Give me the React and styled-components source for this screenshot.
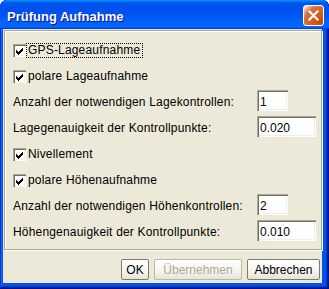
import React from "react";
import styled, { createGlobalStyle } from "styled-components";

const GlobalStyle = createGlobalStyle`
  html, body {
    margin: 0;
    padding: 0;
    background: #ffffff;
    overflow: hidden;
  }
  body {
    font-family: "Liberation Sans", Arial, sans-serif;
  }
`;

const Window = styled.div`
  width: 329px;
  height: 289px;
  box-sizing: border-box;
  display: flex;
  flex-direction: column;
  background: #0055e5;
  border-radius: 7px 7px 0 0;
  overflow: hidden;
  box-shadow: inset -1px -1px #00138c, inset 1px 1px #0831d9,
    inset -2px -2px #001ea0, inset 2px 2px #166aee, inset -3px -3px #003bda,
    inset 3px 3px #0855dd;
`;

const TitleBar = styled.div`
  height: 29px;
  flex: none;
  display: flex;
  align-items: flex-start;
  justify-content: space-between;
  padding: 0 5px 0 7px;
  box-sizing: border-box;
  background: linear-gradient(
    180deg,
    #0997ff,
    #0053ee 10%,
    #0050ee 40%,
    #0066ff 86%,
    #0066ff 92%,
    #005bff 95%,
    #003dd7 97%,
    #003dd7
  );
  border-radius: 7px 7px 0 0;
`;

const Title = styled.div`
  margin-top: 9px;
  line-height: 15px;
  font-size: 13px;
  font-weight: bold;
  color: #ffffff;
  text-shadow: 1px 1px #0f1089;
`;

const CloseButton = styled.div`
  margin-top: 5px;
  width: 21px;
  height: 21px;
  box-sizing: border-box;
  border: 1px solid #ffffff;
  border-radius: 3px;
  display: flex;
  align-items: center;
  justify-content: center;
  background: radial-gradient(
    circle at 90% 90%,
    #cc4600 0,
    #dc6527 55%,
    #cd7546 70%,
    #ffccb2 90%,
    #ffffff 100%
  );
`;

const ClientArea = styled.div`
  flex: 1;
  margin: 0 7px 6px 3px;
  background: #ece9d8;
  display: flex;
  flex-direction: column;
`;

const Panel = styled.div`
  margin: 1px 0 0 1px;
  border: 1px solid #aca899;
  box-shadow: inset 1px 1px #ffffff, 1px 1px #ffffff;
  padding: 6px 5px 4px 8px;
  display: flex;
  flex-direction: column;
`;

const CheckRow = styled.div`
  height: 26px;
  display: flex;
  align-items: center;
`;

const Box = styled.span`
  width: 13px;
  height: 13px;
  flex: none;
  background: #ffffff;
  box-shadow: inset 1px 1px #aca899, inset 2px 2px #716f64,
    inset -1px -1px #ffffff, inset -2px -2px #f1efe2;
  display: block;
`;

const CheckText = styled.span`
  border: 1px dotted ${(p) => (p.$focused ? "#000000" : "transparent")};
  padding: 0 2px 0 1px;
  line-height: 13px;
  font-size: 12px;
  letter-spacing: 0.18px;
  color: #000000;
`;

const FieldRow = styled.div`
  height: 26px;
  display: flex;
  align-items: flex-start;
`;

const FieldLabel = styled.span`
  flex: 1;
  line-height: 26px;
  font-size: 12px;
  letter-spacing: 0.18px;
  color: #000000;
  white-space: nowrap;
`;

const FieldSlot = styled.div`
  width: 59px;
  flex: none;
  padding-top: 1px;
`;

const TextField = styled.input`
  display: block;
  width: ${(p) => p.$width}px;
  height: 21px;
  box-sizing: border-box;
  border: none;
  outline: none;
  margin: 0;
  padding: 2px 0 0 3px;
  background: #ffffff;
  box-shadow: inset 1px 1px #aca899, inset 2px 2px #716f64,
    inset -1px -1px #ffffff, inset -2px -2px #f1efe2;
  font-family: "Liberation Sans", Arial, sans-serif;
  font-size: 12px;
  color: #000000;
`;

const ButtonBar = styled.div`
  display: flex;
  justify-content: flex-end;
  gap: 5px;
  padding: 9px 2px 0 0;
`;

const Button = styled.button`
  width: ${(p) => p.$width}px;
  height: 21px;
  box-sizing: border-box;
  margin: 0;
  padding: 0;
  border: 1px solid ${(p) => (p.disabled ? "#b9b6a8" : "#7b7b75")};
  border-radius: 2px;
  background: linear-gradient(180deg, #ffffff 0%, #f6f5f1 55%, #e6e3da 100%);
  font-family: "Liberation Sans", Arial, sans-serif;
  font-size: 12px;
  color: ${(p) => (p.disabled ? "#aca899" : "#000000")};
  text-align: center;
`;

const CheckMark = () => (
  <svg width="13" height="13" viewBox="0 0 13 13" shapeRendering="crispEdges">
    <path
      d="M3 5h1v3H3zM4 6h1v3H4zM5 7h1v3H5zM6 6h1v3H6zM7 5h1v3H7zM8 4h1v3H8zM9 3h1v3H9z"
      fill="#000000"
    />
  </svg>
);

const CheckBox = ({ label, focused }) => (
  <CheckRow>
    <Box>
      <CheckMark />
    </Box>
    <CheckText $focused={focused}>{label}</CheckText>
  </CheckRow>
);

const Field = ({ label, value, width }) => (
  <FieldRow>
    <FieldLabel>{label}</FieldLabel>
    <FieldSlot>
      <TextField $width={width} defaultValue={value} readOnly />
    </FieldSlot>
  </FieldRow>
);

export default function App() {
  return (
    <>
      <GlobalStyle />
      <Window>
        <TitleBar>
          <Title>Prüfung Aufnahme</Title>
          <CloseButton>
            <svg width="11" height="11" viewBox="0 0 11 11">
              <path
                d="M1.5 1.5L9.5 9.5M9.5 1.5L1.5 9.5"
                stroke="#ffffff"
                strokeWidth="2.2"
                strokeLinecap="square"
              />
            </svg>
          </CloseButton>
        </TitleBar>
        <ClientArea>
          <Panel>
            <CheckBox label="GPS-Lageaufnahme" focused />
            <CheckBox label="polare Lageaufnahme" />
            <Field label="Anzahl der notwendigen Lagekontrollen:" value="1" width={31} />
            <Field label="Lagegenauigkeit der Kontrollpunkte:" value="0.020" width={59} />
            <CheckBox label="Nivellement" />
            <CheckBox label="polare Höhenaufnahme" />
            <Field label="Anzahl der notwendigen Höhenkontrollen:" value="2" width={31} />
            <Field label="Höhengenauigkeit der Kontrollpunkte:" value="0.010" width={59} />
          </Panel>
          <ButtonBar>
            <Button $width={28}>OK</Button>
            <Button $width={88} disabled>
              Übernehmen
            </Button>
            <Button $width={73}>Abbrechen</Button>
          </ButtonBar>
        </ClientArea>
      </Window>
    </>
  );
}
